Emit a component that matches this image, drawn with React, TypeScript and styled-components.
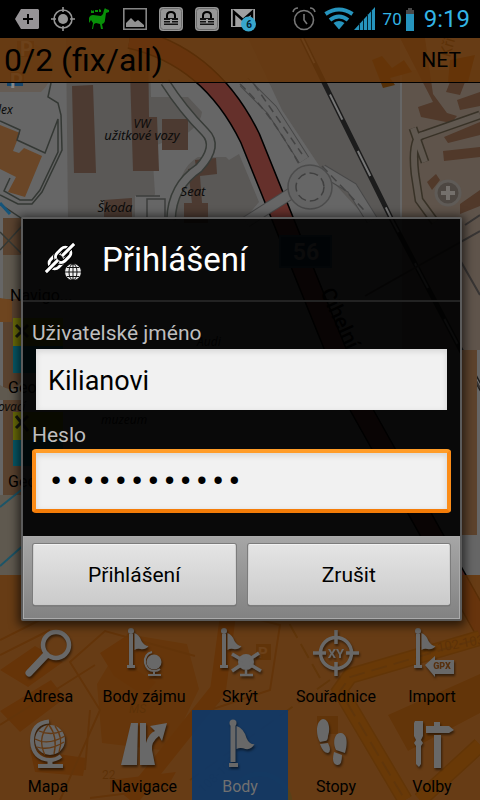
import React from "react";
import styled, { createGlobalStyle, css } from "styled-components";

const GlobalStyle = createGlobalStyle`
  * { box-sizing: border-box; }
  body { margin: 0; background: #000; font-family: Roboto, "Noto Sans", sans-serif; }
  button, input { font-family: inherit; }
`;

const Screen = styled.div`
  position: relative;
  isolation: isolate;
  display: flex;
  flex-direction: column;
  min-height: 100vh;
  overflow: hidden;
  background: #666;
`;

const MapCanvas = styled.svg`
  position: absolute;
  inset: 0;
  width: 100%;
  height: 100%;
  z-index: -1;
`;

const StatusBar = styled.header`
  display: flex;
  justify-content: space-between;
  align-items: center;
  height: 38px;
  padding: 0 10px 0 15px;
  background: #000;
  color: #33b5e5;
`;

const StatusGroup = styled.div<{ $gap: number }>`
  display: flex;
  align-items: center;
  gap: ${(p) => p.$gap}px;
  svg { display: block; overflow: visible; }
`;

const BatteryLevel = styled.span`
  font-size: 17px;
  line-height: 24px;
  margin-left: 8px;
`;

const Clock = styled.time`
  font-size: 24px;
  line-height: 32px;
  margin-left: 10px;
`;

const TopBar = styled.div`
  display: flex;
  justify-content: space-between;
  align-items: center;
  height: 45px;
  padding: 0 19px 0 4px;
  background: rgba(104, 53, 8, 0.86);
  border-bottom: 1px solid #000;
  color: #000;
`;

const FixCount = styled.span`
  font-size: 32px;
  line-height: 40px;
`;

const Provider = styled.span`
  font-size: 21px;
  line-height: 28px;
`;

const Spacer = styled.div`
  flex: 1;
`;

const Menu = styled.nav`
  display: grid;
  grid-template-columns: repeat(5, 1fr);
  padding-top: 45px;
  background: rgba(104, 53, 8, 0.86);
`;

const MenuItem = styled.button<{ $active?: boolean }>`
  display: flex;
  flex-direction: column;
  align-items: center;
  justify-content: space-between;
  height: 90px;
  padding: 8px 0 1px;
  border: 0;
  background: transparent;
  color: #000;
  font-size: 16px;
  line-height: 24px;
  white-space: nowrap;
  ${(p) =>
    p.$active &&
    css`
      background: rgba(10, 56, 108, 0.88);
      color: #707070;
    `}
`;

const MenuIcon = styled.svg`
  width: 48px;
  height: 52px;
  fill: #686868;
  stroke: #686868;
  stroke-width: 0;
  filter: drop-shadow(1px 2px 1px rgba(0, 0, 0, 0.5));
`;

const Overlay = styled.div`
  position: absolute;
  inset: 38px 0 0;
  display: flex;
  align-items: center;
  padding: 0 18px 0 21px;
`;

const Dialog = styled.form`
  flex: 1;
  border: 2px solid #5b5b5b;
  border-radius: 2px;
  background: rgba(0, 0, 0, 0.91);
  background-clip: padding-box;
  box-shadow: 0 2px 10px 3px rgba(0, 0, 0, 0.6);
`;

const DialogHeader = styled.div`
  display: flex;
  align-items: center;
  height: 83px;
  padding: 0 20px;
  gap: 19px;
  border-bottom: 2px solid #232323;
`;

const Title = styled.h1`
  margin: 0;
  color: #fff;
  font-size: 33px;
  font-weight: 400;
  line-height: 40px;
`;

const Fields = styled.div`
  display: flex;
  flex-direction: column;
  gap: 11px;
  padding: 18px 9px 23px;
`;

const Field = styled.div`
  display: flex;
  flex-direction: column;
`;

const Label = styled.label`
  color: #bebebe;
  font-size: 21px;
  line-height: 27px;
`;

const TextInput = styled.input<{ $focused?: boolean }>`
  width: 100%;
  height: 64px;
  padding: 2px 12px 0;
  border: 4px solid transparent;
  border-width: 2px 4px 1px;
  outline: none;
  background: #f1f1f1;
  background-clip: padding-box;
  box-shadow: inset 0 2px 6px rgba(0, 0, 0, 0.12);
  color: #000;
  font-size: 27px;
  ${(p) =>
    p.$focused &&
    css`
      border: 4px solid #ff8a14;
      border-color: #ff9c28 #fb8c18 #f47c08;
      border-radius: 4px;
      font-family: "Liberation Mono", monospace;
    `}
`;

const Actions = styled.div`
  display: grid;
  grid-template-columns: 1fr 1fr;
  gap: 12px;
  padding: 7px 9px 13px;
  border: 1px solid #aaa;
  background: linear-gradient(#a6a6a6, #828282);
`;

const ActionButton = styled.button`
  height: 61px;
  border: 1px solid #ececec;
  border-color: #f2f2f2 #d0d0d0 #c8c8c8;
  border-radius: 2px;
  background: linear-gradient(#e4e4e4, #cbcbcb);
  box-shadow: 0 0 0 1px #7c7c7c, 0 1px 1px #333;
  color: #000;
  font-size: 21px;
`;

const LockIcon = () => (
  <svg width="24" height="24" viewBox="0 0 24 24">
    <rect width="24" height="24" rx="4" fill="#969696" />
    <rect x="1.5" y="1.5" width="21" height="21" rx="3" fill="none" stroke="#6c6c6c" />
    <path d="M8 12V8.500q0-3.500 4-3.500t4 3.500V12" fill="none" stroke="#000" strokeWidth="2" />
    <path d="M5 11h14v2H5zM5 14h14v1.500H5zM5 16.500h14v1.500H5z" fill="#111" />
    <path d="M11 12h2v4h-2z" fill="#999" />
  </svg>
);

const StatusIcons = () => (
  <StatusGroup $gap={12}>
    <svg width="24" height="20" viewBox="0 0 24 20">
      <path d="M6 0h17l1 1v18l-1 1H6L0 10z" fill="#969396" />
      <path d="M13 5v10M8 10h10" stroke="#000" strokeWidth="2" />
    </svg>
    <svg width="24" height="24" viewBox="0 0 24 24" fill="none" stroke="#969696" strokeWidth="1.6">
      <circle cx="12" cy="12" r="9" />
      <circle cx="12" cy="12" r="5" fill="#969696" stroke="none" />
      <path d="M12 0v5M12 19v5M0 12h5M19 12h5" />
    </svg>
    <svg width="24" height="24" viewBox="0 0 24 24" fill="#089008">
      <path d="M2 11q1-3 4-3l8 1 2-2 1-4 1-2 1 1 3 1v2l-3 1-1 7q0 3-3 4l1 5h-2l-1-5-4-1-2 1-1 5H5l1-6-2-3-2 3z" />
      <path d="M4 3l2 1 1-1v3H4zM8 3h3v2H8zM12 2l2 1v2h-2z" />
    </svg>
    <svg width="24" height="22" viewBox="0 0 24 22">
      <path d="M.8.8h22.4v20.4H.8z" fill="none" stroke="#858585" strokeWidth="1.6" />
      <path d="M3 19v-4l5-5 4 4 3-2 6 5v2z" fill="#929292" />
    </svg>
    <LockIcon />
    <LockIcon />
    <svg width="26" height="24" viewBox="0 0 26 24">
      <path d="M0 2h24v18H0z" fill="#a0a0a0" />
      <path d="M3 19V5l9 8 9-8v14" fill="none" stroke="#000" strokeWidth="2.500" />
      <circle cx="17.500" cy="17" r="7.500" fill="#38a6cc" />
      <text x="18" y="21" textAnchor="middle" fontSize="10" fontWeight="700" fill="#002030">6</text>
    </svg>
  </StatusGroup>
);

const PhoneStatus = () => (
  <StatusGroup $gap={0}>
    <svg width="32" height="24" viewBox="0 0 32 24" fill="none" stroke="#777" strokeWidth="1.6">
      <circle cx="12" cy="13" r="9.500" />
      <path d="M12 7v6l3 4M1 5q1-4 5-4M18 1q4 0 5 4" />
    </svg>
    <svg width="30" height="24" viewBox="0 0 30 24" fill="none" stroke="#2694bd" strokeWidth="4">
      <path d="M1.500 7q13.500-9 27 0M6 13q9-7 18 0" />
      <path d="M9.500 16q5.500-4 11 0L15 22.500z" fill="#2694bd" stroke="none" />
    </svg>
    <svg width="21" height="24" viewBox="0 0 21 24">
      <path d="M0 23L21 0v23z" fill="#2694bd" />
      <path d="M5.500 16v7M9.500 12v11M13.500 7v16M17.500 3v20" stroke="#00222e" />
    </svg>
    <BatteryLevel>70</BatteryLevel>
    <svg width="12" height="23" viewBox="0 0 12 23">
      <path d="M6 0h4v2h2v4H4V2h2z" fill="#484848" />
      <path d="M4 6h8v17H4z" fill="#2694bd" />
    </svg>
    <Clock>9:19</Clock>
  </StatusGroup>
);

const smallFlag = (
  <>
    <circle cx="11" cy="3" r="3" />
    <path d="M9 6h4v31h2v3H7v-3h2zM14.500 5q5 2 7 8 3 5 7 5-3 4-8 3-3-1-6 1z" />
  </>
);

const icons: Record<string, React.ReactNode> = {
  search: (
    <>
      <circle cx="32" cy="17" r="13" fill="none" strokeWidth="4.500" />
      <path d="M22 27L5 45" strokeWidth="7" strokeLinecap="round" />
    </>
  ),
  poi: (
    <>
      {smallFlag}
      <circle cx="34" cy="34" r="7.500" />
      <path d="M32 24q-8 2-7 11 2 8 9 8 4 0 6-2M34 43v4M28 47h13" fill="none" strokeWidth="2" />
    </>
  ),
  hide: (
    <>
      <g transform="translate(-3 0)">{smallFlag}</g>
      <circle cx="30" cy="34" r="8" />
      <path d="M16 26l29 17M43 25L16 43" strokeWidth="3.500" />
      <path d="M24 47h13M30 42v5" strokeWidth="2.500" />
    </>
  ),
  coords: (
    <>
      <circle cx="24" cy="25" r="15.500" fill="none" strokeWidth="3.500" />
      <path d="M24 2v14M24 34v14M1 25h13M34 25h13" strokeWidth="3.500" />
      <text x="24" y="30" textAnchor="middle" fontSize="13" fontWeight="700">XY</text>
    </>
  ),
  gpx: (
    <>
      <g transform="translate(-1 0)">{smallFlag}</g>
      <path d="M17 37l10-9v4h19v14H27v3z" />
      <text x="34" y="41" textAnchor="middle" fontSize="9" fontWeight="900" fill="#57300e">GPX</text>
    </>
  ),
  globe: (
    <>
      <circle cx="26" cy="22" r="15" />
      <path d="M25 3.500Q8 5 8 23q1 18 18 19 6 0 11-4" fill="none" strokeWidth="4" />
      <path d="M26 42v5" strokeWidth="5" />
      <path d="M14 48h25" strokeWidth="4" />
      <path d="M11 21q13 7 30-3M13 29q13 4 27-5M15 13q12 5 23 0M24 7q-11 14-3 30M25 7q9 12 5 29M31 8q9 12 4 26" fill="none" stroke="#633913" strokeWidth="1.300" />
    </>
  ),
  road: (
    <path d="M11 5h7l-1 42H1zM20 5h6v20q3-10 9-12l-5-5 17-3-5 18-3-5q-8 6-7 14l3 15H20z" />
  ),
  flag: (
    <>
      <circle cx="17" cy="5" r="3.500" />
      <path d="M14.500 8h5v36h-5zM13 45h9v4h-9zM20.500 8q7 2 10 12 3 7 8 6-3 6-9 5-5-2-9 0z" />
    </>
  ),
  steps: (
    <path d="M11 1c5 0 8 8 5 17q0 5-3 5l-5 1C4 18 3 3 11 1zM8 26l8-1q4 8 0 10-5 0-8-9zM29 15c6 1 7 9 4 20l-9-3c-4-8-1-18 5-17zM22 34l8 3q0 11-5 10-6-1-3-13z" />
  ),
  tools: (
    <path d="M7 3h8v15l-2 4 2 3-2 3v18l-2 3-3-3V28l-2-3 2-3-2-4V5zM18 8h8V4h6v4h9l5 4-5 3H18zM26 17h7v33h-7z" />
  ),
};

const menuItems = [
  { label: "Adresa", icon: "search" },
  { label: "Body zájmu", icon: "poi" },
  { label: "Skrýt", icon: "hide" },
  { label: "Souřadnice", icon: "coords" },
  { label: "Import", icon: "gpx" },
  { label: "Mapa", icon: "globe" },
  { label: "Navigace", icon: "road" },
  { label: "Body", icon: "flag", active: true },
  { label: "Stopy", icon: "steps" },
  { label: "Volby", icon: "tools" },
];

const LoginIcon = () => (
  <svg width="40" height="40" viewBox="0 0 40 40" aria-hidden="true">
    <g fill="none" strokeLinecap="butt">
      <g transform="rotate(-45 17 18)">
        <rect x="4" y="12.500" width="17" height="11" rx="5.500" stroke="#fff" strokeWidth="3" />
        <rect x="13" y="12.500" width="17" height="11" rx="5.500" stroke="#000" strokeWidth="5" />
        <rect x="13" y="12.500" width="17" height="11" rx="5.500" stroke="#fff" strokeWidth="3" />
        <path d="M-3 18h17M20 18h17" stroke="#000" strokeWidth="5" />
        <path d="M-3 18h17M20 18h17" stroke="#fff" strokeWidth="3" />
      </g>
    </g>
    <circle cx="30" cy="32" r="8.500" fill="#eee" stroke="#000" />
    <path d="M30 24v16M22 32h16M24 27.500h12M24 36.500h12" stroke="#111" />
    <ellipse cx="30" cy="32" rx="4" ry="8" fill="none" stroke="#111" />
  </svg>
);

const CityMap = () => (
  <MapCanvas viewBox="0 0 480 800" preserveAspectRatio="xMidYMid slice" aria-hidden="true">
    <rect width="480" height="800" fill="#666" />
    <path d="M66 38l2 182h67v-24h19l1-2-3-47 37-15q12-9 13-20l-14-15h-37l-2-73zM176 220q-2-50 22-63h28l3 3 10-6 20 48-15 18zM248 38l34 72 40 60 46 50h32V38z" fill="#5a5856" />
    <path d="M72 86l21-1 3 88H74zM129 38h19l1 79h8l2 54h-26zM162 119h26v31h-26zM188 169l8-1-1-8 21-2 1 16-17 2 2 27h6v20h-24v-20h8zM104 200l28-2v20h-28z" fill="#4c3a31" />
    <path d="M402 70h78v280h-78z" fill="#5f544b" />
    <path d="M400 38h25l8 56 14 19 10 3-6 7-30-6-3-10 15-5zM450 82h15l-5 13-14-3zM457 100l23-8v14l-20 4zM444 137l36-15v13l-32 8zM443 151l37-4v10l-36 4zM427 182l9-8 4 6-8 10zM460 204l20-14v16l-20 8z" fill="#51392a" />
    <path d="M480 115l-57 20q-12 2-8 39l4 26 16 22M413 128l12 34" fill="none" stroke="#383227" strokeWidth="9" />
    <path d="M480 115l-57 20q-12 2-8 39l4 26 16 22M413 128l12 34" fill="none" stroke="#605850" strokeWidth="6" />
    <path d="M0 125l20 8-7 18 6 2 5-5 18 8-17 41-17-5 8-15-16-8z" fill="#6a4627" />
    <path d="M3 218h18v357H3z" fill="#59422f" />
    <path d="M3 255h18v44H3zM0 385q15 10 22-5v20H0zM0 495h22v80H0z" fill="#5f594f" />
    <path d="M0 298l12 2v22H0z" fill="#6e451f" />
    <path d="M0 121l20 9-3 10 28 13 13-34v33l-18 38-8 10H20L4 191l6-13M51 83l-3 14 10 6 3 12 1 35-20 42-10 12H18L0 195M0 204l24 16M0 232l22 22M0 250l22-24" fill="none" stroke="#343834" strokeWidth="1.500" />
    <path d="M0 203l10 11" stroke="#15547a" strokeWidth="3" />
    <path d="M165 82q18 28 40 50 14 14-6 36-27 18-28 52" fill="none" stroke="#383c38" strokeWidth="10" />
    <path d="M165 82q18 28 40 50 14 14-6 36-27 18-28 52" fill="none" stroke="#666" strokeWidth="7" />
    <path d="M147 199h18v20h-18zM136 196h24" fill="none" stroke="#3c3e3c" strokeWidth="1.500" />
    <path d="M130 38q80 18 120 100l105 260M355 398l140 250" fill="none" stroke="#000" strokeWidth="22" />
    <path d="M130 38q80 18 120 100l105 260M355 398l140 250" fill="none" stroke="#65302b" strokeWidth="19" />
    <path d="M246 222l52-33M244 82l28 28 32 50M322 170l30 18 20 32" fill="none" stroke="#484848" strokeWidth="12" />
    <path d="M246 222l52-33M244 82l28 28 32 50M322 170l30 18 20 32" fill="none" stroke="#666" strokeWidth="10" />
    <circle cx="310" cy="187" r="22" fill="#636363" stroke="#4c4c4c" strokeWidth="1.500" />
    <circle cx="310" cy="187" r="14" fill="#666" stroke="#404040" strokeWidth="1.500" strokeDasharray="9 4" />
    <path d="M240 84q32 30 60 82M254 84l48 70M322 166l42 44" fill="none" stroke="#444" strokeDasharray="8 5" strokeWidth="1.500" />
    <path d="M302 38l90 182 90 170" fill="none" stroke="#1c1c1c" strokeWidth="5" />
    <path d="M302 38l90 182 90 170" fill="none" stroke="#777" strokeWidth="2" strokeDasharray="28 35" />
    <path d="M365 296l115-65M460 260l20 35M465 225l15-10M465 360l15 28" fill="none" stroke="#383534" strokeWidth="2" />
    <path d="M461 350h16v185h-16z" fill="#5d432d" />
    <circle cx="448" cy="193" r="12" fill="#4d4742" stroke="#5f5b57" strokeWidth="3" />
    <path d="M448 186v14M441 193h14" stroke="#74706c" strokeWidth="4" />
    <path d="M280 236h51v31h-51z" fill="#102c48" stroke="#24485c" strokeWidth="2" />
    <text x="306" y="260" fill="#777" textAnchor="middle" fontSize="23" fontWeight="700">56</text>
    <path d="M13 318h50v28H13zM13 412h50v28H13z" fill="#6a6c08" />
    <path d="M13 346h50v27H13zM13 440h50v26H13z" fill="#075968" />
    <path d="M16 325l12 12M28 325l-12 12M16 416l12 15M28 416l-12 12" stroke="#17190f" strokeWidth="3" />
    <path d="M0 507l25-20M0 566l26-23" stroke="#1c5568" strokeWidth="2" />
    <g fill="#000" fontSize="16">
      <text x="10" y="301">Navigo...</text>
      <text x="8" y="393">Geocac</text>
      <text x="8" y="487">Geocac</text>
    </g>
    <g fill="#0b0b0b" fontFamily="Noto Sans, sans-serif" fontStyle="italic" fontSize="12">
      <text x="-2" y="114">lex</text>
      <text x="142" y="128" textAnchor="middle">VW</text>
      <text x="142" y="140" textAnchor="middle" fontSize="13">užitkové vozy</text>
      <text x="193" y="196" textAnchor="middle" fontSize="13">Seat</text>
      <text x="115" y="212" textAnchor="middle" fontSize="13">Škoda</text>
      <text x="-2" y="411">ovací</text>
      <text x="101" y="424">muzeum</text>
      <text x="197" y="346">Audi</text>
    </g>
    <text x="0" y="0" fontSize="21" fontWeight="500" transform="translate(320 292) rotate(65)">Cihelní</text>
    <path d="M97 684l30-50 60 10 12 45-30 62-67-8z" fill="#5c3c1c" />
    <path d="M100 653l26-17 24 12-14 22 20 12-12 14-30-20zM0 670l35-24 28 16-35 25zM0 711l51-31 14 18-45 34zM30 750l56 8-3 18-48-4zM110 780l66-8-8 14-58 6z" fill="#5e2c0c" />
    <path d="M60 800l40-90-30-48 35-31 90 25M0 725l95-60M85 770l5-60M90 798l80-10M260 620l20 5-10 65-60 20M0 655l50-25M0 640l40-20M220 700l-90 100" fill="none" stroke="#462b13" strokeWidth="2" />
    <path d="M228 615l-10 75-88 110" fill="none" stroke="#5c300c" strokeWidth="16" />
    <path d="M480 638l-130 38-10 14 65 110M480 745l-60 55" fill="none" stroke="#403500" strokeWidth="16" />
    <path d="M480 638l-130 38-10 14 65 110M480 745l-60 55" fill="none" stroke="#705000" strokeWidth="13" />
    <path d="M475 640l-125 37-10 14 65 109M330 680L190 780M320 678l-35-62" fill="none" stroke="#383818" strokeWidth="2" strokeDasharray="16 7" />
    <path d="M480 674l-92 41 20 36 72-38z" fill="#4b3310" />
    <circle cx="260" cy="804" r="30" fill="none" stroke="#008878" strokeWidth="5" />
    <path d="M256 644h15v16h-15zM317 716h21v18h-21z" fill="#3d3010" />
    <g fill="#181808" fontSize="12">
      <text x="129" y="713" fontStyle="italic">MŠ</text>
      <text x="102" y="779">22</text>
      <text transform="translate(203 794) rotate(-43)" fontSize="13">108-109</text>
      <text transform="translate(438 652) rotate(-10)" fontSize="13">102-103</text>
      <text transform="translate(450 58) rotate(-74)" fontSize="16">Kři</text>
    </g>
    <path d="M0 38q54 3 53 30-2 15-12 24H0z" fill="#655c54" />
    <path d="M17 41h17v16H17zM10 72h14v10H10z" fill="#584432" />
    <path d="M7 83h16v3H7z" fill="#17466b" />
    <path d="M372 60l10-4 10 12 12-8 8 12-22 6 5 7-12 3zM450 60l25-5-7 27h-20z" fill="#553008" />
    <g fontSize="20" fontWeight="700" fill="#888">
      <text x="20" y="56">P</text>
      <text x="10" y="88">P</text>
      <text x="258" y="658" fontSize="15">P</text>
    </g>
  </MapCanvas>
);

export default function App() {
  return (
    <>
      <GlobalStyle />
      <Screen>
        <CityMap />
        <StatusBar>
          <StatusIcons />
          <PhoneStatus />
        </StatusBar>
        <TopBar>
          <FixCount>0/2 (fix/all)</FixCount>
          <Provider>NET</Provider>
        </TopBar>
        <Spacer />
        <Menu>
          {menuItems.map((item) => (
            <MenuItem key={item.label} type="button" $active={item.active}>
              <MenuIcon viewBox="0 0 48 52" aria-hidden="true">{icons[item.icon]}</MenuIcon>
              <span>{item.label}</span>
            </MenuItem>
          ))}
        </Menu>
        <Overlay>
          <Dialog role="dialog" aria-labelledby="login-title" onSubmit={(e) => e.preventDefault()}>
            <DialogHeader>
              <LoginIcon />
              <Title id="login-title">Přihlášení</Title>
            </DialogHeader>
            <Fields>
              <Field>
                <Label htmlFor="username">Uživatelské jméno</Label>
                <TextInput id="username" type="text" defaultValue="Kilianovi" />
              </Field>
              <Field>
                <Label htmlFor="password">Heslo</Label>
                <TextInput id="password" type="password" defaultValue="kilianovi123" $focused />
              </Field>
            </Fields>
            <Actions>
              <ActionButton type="submit">Přihlášení</ActionButton>
              <ActionButton type="button">Zrušit</ActionButton>
            </Actions>
          </Dialog>
        </Overlay>
      </Screen>
    </>
  );
}
